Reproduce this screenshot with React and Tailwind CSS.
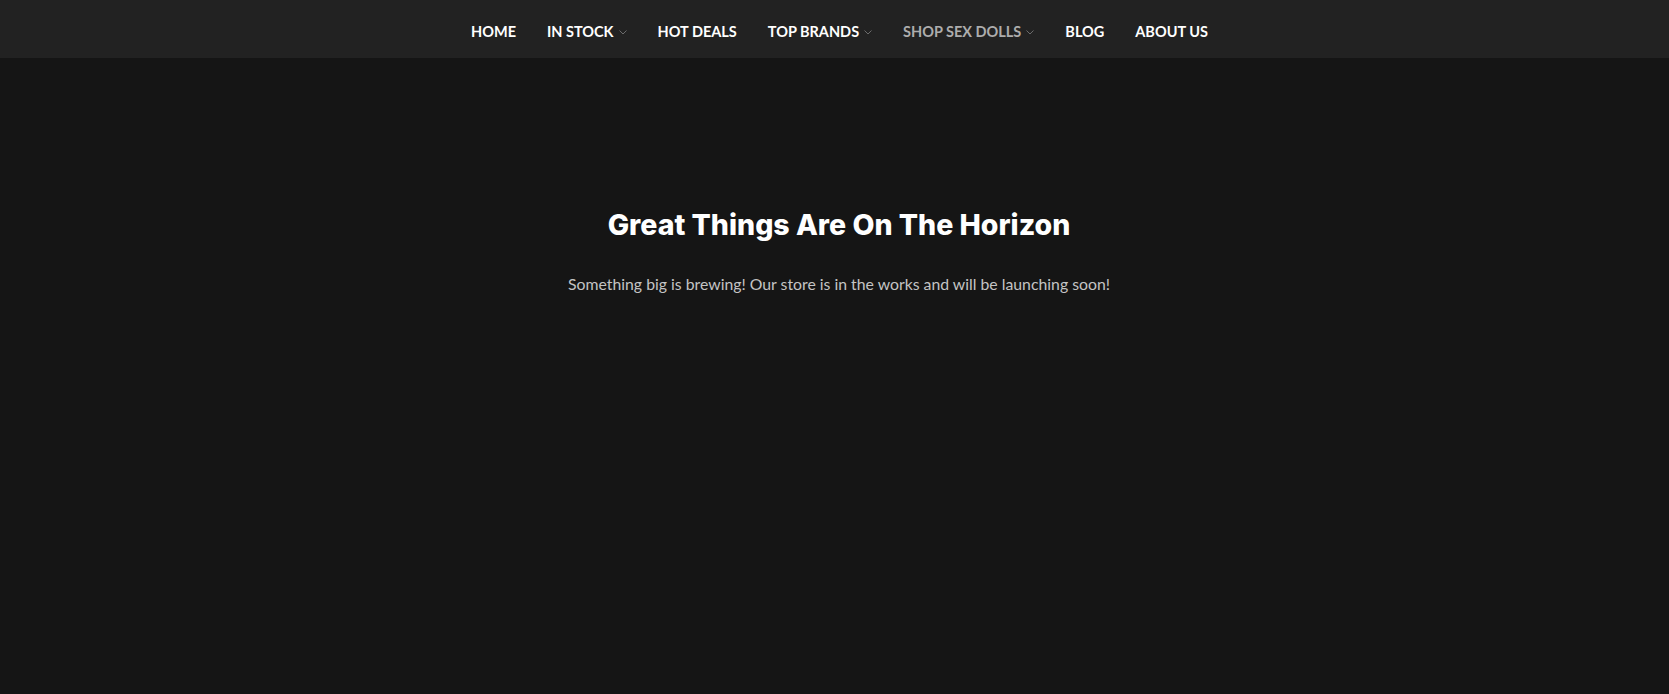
import React from "react";

const navItems = [
  { label: "HOME" },
  { label: "IN STOCK", caret: true },
  { label: "HOT DEALS" },
  { label: "TOP BRANDS", caret: true },
  { label: "SHOP SEX DOLLS", caret: true, active: true },
  { label: "BLOG" },
  { label: "ABOUT US" },
];

function Caret() {
  return (
    <svg width="8" height="5" viewBox="0 0 8 5" className="ml-[5px] mt-[1px]">
      <path d="M0.5 0.5 L4 4 L7.5 0.5" fill="none" stroke="#6b6b6b" strokeWidth="1" />
    </svg>
  );
}

export default function App() {
  return (
    <div className="min-h-[694px] bg-[#151515] font-['Lato','Liberation_Sans',sans-serif]">
      {/* top nav */}
      <nav className="h-[58px] bg-[#222222] flex items-center justify-center pt-[6px]">
        <ul className="flex items-center gap-[31px] pl-[10px]">
          {navItems.map((item) => (
            <li
              key={item.label}
              className={`flex items-center text-[14.5px] font-bold ${
                item.active ? "text-[#adadad]" : "text-white"
              }`}
            >
              {item.label}
              {item.caret && <Caret />}
            </li>
          ))}
        </ul>
      </nav>

      {/* coming soon */}
      <section className="flex flex-col items-center pt-[149px] pl-[9px] text-center">
        <h1 className="text-[28.5px] leading-[36px] font-extrabold text-white font-['Inter','Open_Sans',sans-serif]">
          Great Things Are On The Horizon
        </h1>
        <p className="mt-[29px] text-[15.8px] text-[#c4c4c4]">
          Something big is brewing! Our store is in the works and will be launching soon!
        </p>
      </section>
    </div>
  );
}
